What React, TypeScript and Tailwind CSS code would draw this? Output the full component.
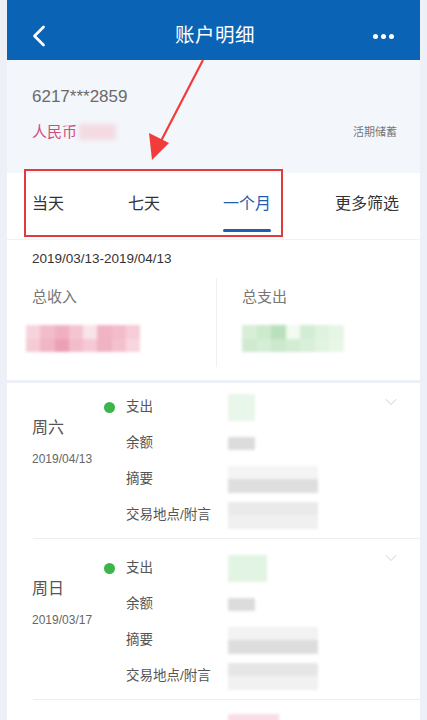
import { ChevronLeft, ChevronDown } from "lucide-react";

const FONT = "font-['Liberation_Sans','Noto_Sans_CJK_SC',sans-serif]";

const pinkCells = [
    "bg-[#f7d3dd]", "bg-[#f2bccb]", "bg-[#efb1c2]", "bg-[#f4c4d1]", "bg-[#f9e4ea]", "bg-[#f0b4c4]", "bg-[#f2bccb]", "bg-[#f6cdd8]",
    "bg-[#f5cbd6]", "bg-[#f0b6c6]", "bg-[#eba0b5]", "bg-[#f2bdcb]", "bg-[#f5c9d5]", "bg-[#efb3c3]", "bg-[#f3c1ce]", "bg-[#f7d6df]",
];

const greenCells = [
    "bg-[#d7eed7]", "bg-[#cde9ce]", "bg-[#b9e0bc]", "bg-[#f2faf2]", "bg-[#d3ecd4]", "bg-[#dff2df]", "bg-[#e6f5e6]",
    "bg-[#cfeacf]", "bg-[#d5edd6]", "bg-[#cbe8cc]", "bg-[#d3ecd3]", "bg-[#d9efda]", "bg-[#e1f3e1]", "bg-[#e9f7e9]",
];

function Mosaic({ cells, cols, className }: { cells: string[]; cols: string; className: string }) {
    return (
        <div className={`grid ${cols} blur-[1.5px] ${className}`}>
            {cells.map((c, i) => (
                <div key={i} className={c} />
            ))}
        </div>
    );
}

type Line = { label: string; value: React.ReactNode };

function TxRow({
    day,
    date,
    lines,
    top,
}: {
    day: string;
    date: string;
    lines: Line[];
    top: string;
}) {
    return (
        <div className={`relative flex pl-[25px] ${top} pb-[5px]`}>
            <div className="w-[72px] shrink-0">
                <div className="mt-[27px] h-[24px] text-[16px] leading-[24px] text-[#555]">{day}</div>
                <div className="mt-[10px] h-[18px] text-[12px] leading-[18px] text-[#666]">{date}</div>
            </div>
            <div className="flex-1">
                {lines.map((l, i) => (
                    <div key={l.label} className="flex h-9 items-center">
                        <div className="w-[10px] shrink-0">
                            {i === 0 && <div className="h-[11px] w-[11px] rounded-full bg-[#3cb54a]" />}
                        </div>
                        <div className="ml-[12px] w-[102px] shrink-0 text-[13.5px] text-[#555]">{l.label}</div>
                        <div className="flex h-full flex-1 items-center">{l.value}</div>
                    </div>
                ))}
            </div>
            <ChevronDown
                className="absolute right-[19px] top-[9px] h-[20px] w-[20px] text-[#cfcfcf]"
                strokeWidth={1.2}
            />
        </div>
    );
}

function Blob({ className }: { className: string }) {
    return <div className={`blur-[1.5px] ${className}`} />;
}

function TwoTone({ top, bottom, w }: { top: string; bottom: string; w: string }) {
    return (
        <div className={`flex ${w} flex-col blur-[1.5px]`}>
            <div className={`h-[13px] ${top}`} />
            <div className={`h-[14px] ${bottom}`} />
        </div>
    );
}

export default function App() {
    return (
        <div className={`relative h-[720px] w-full overflow-hidden bg-[#edf1f7] px-[7px] ${FONT}`}>
            {/* header */}
            <div className="flex h-[60px] items-center bg-[#0b63b6] px-[22px] pt-[12px] text-white">
                <ChevronLeft className="-ml-[8px] h-[36px] w-[36px]" strokeWidth={1.8} />
                <div className="flex-1 text-center text-[19.5px] tracking-[0.5px]">账户明细</div>
                <div className="flex gap-[3px] pr-[4px]">
                    <span className="h-[5px] w-[5px] rounded-full bg-white" />
                    <span className="h-[5px] w-[5px] rounded-full bg-white" />
                    <span className="h-[5px] w-[5px] rounded-full bg-white" />
                </div>
            </div>

            {/* account */}
            <div className="h-[113px] bg-[#f3f6fa] px-[25px] pt-[26px]">
                <div className="h-[22px] text-[17px] leading-[22px] text-[#6a6a6a]">6217***2859</div>
                <div className="mt-[13px] flex items-center justify-between">
                    <div className="flex items-center">
                        <span className="text-[15px] text-[#cf4f7c]">人民币</span>
                        <div className="ml-[2px] h-[16px] w-[37px] bg-[#f4dbe3] blur-[2px]" />
                    </div>
                    <span className="mr-[-2px] text-[11px] text-[#777]">活期储蓄</span>
                </div>
            </div>

            {/* tabs + summary */}
            <div className="bg-white">
                <div className="flex h-[67px] border-b border-[#f2f2f2] pl-[25px] pt-[19px] text-[16px] text-[#333]">
                    <div className="w-[96px]">当天</div>
                    <div className="w-[95px]">七天</div>
                    <div className="w-[112px]">
                        <div className="inline-block text-[#1d5fae]">
                            一个月
                            <div className="mt-[13px] h-[3px] rounded-full bg-[#1d5fae]" />
                        </div>
                    </div>
                    <div>更多筛选</div>
                </div>
                <div className="px-[25px] pt-[9px] text-[13.5px] leading-[20px] text-[#333]">2019/03/13-2019/04/13</div>
                <div className="mt-[8px] flex h-[91px]">
                    <div className="w-[209px] pl-[25px] pt-[10px]">
                        <div className="text-[15px] leading-[20px] text-[#777]">总收入</div>
                        <Mosaic cells={pinkCells} cols="grid-cols-8" className="-ml-[6px] mt-[18px] h-[27px] w-[114px]" />
                    </div>
                    <div className="my-[1px] w-px bg-[#f0f0f0]" />
                    <div className="pl-[25px] pt-[10px]">
                        <div className="text-[15px] leading-[20px] text-[#777]">总支出</div>
                        <Mosaic cells={greenCells} cols="grid-cols-7" className="mt-[18px] h-[27px] w-[102px]" />
                    </div>
                </div>
                <div className="h-[12px]" />
            </div>

            {/* transactions */}
            <div className="mt-[3px] bg-white">
                <TxRow
                    day="周六"
                    date="2019/04/13"
                    top="pt-[6px]"
                    lines={[
                        { label: "支出", value: <Blob className="h-[27px] w-[27px] bg-[#e9f6ea]" /> },
                        { label: "余额", value: <Blob className="h-[13px] w-[27px] bg-[#dcdcdc]" /> },
                        { label: "摘要", value: <TwoTone w="w-[90px]" top="bg-[#f4f4f4]" bottom="bg-[#dedede]" /> },
                        { label: "交易地点/附言", value: <TwoTone w="w-[90px]" top="bg-[#eaeaea]" bottom="bg-[#f0f0f0]" /> },
                    ]}
                />
                <div className="ml-[26px] h-px bg-[#eeeeee]" />
                <TxRow
                    day="周日"
                    date="2019/03/17"
                    top="pt-[11px]"
                    lines={[
                        { label: "支出", value: <Blob className="h-[27px] w-[39px] bg-[#e2f4e3]" /> },
                        { label: "余额", value: <Blob className="h-[13px] w-[27px] bg-[#dcdcdc]" /> },
                        { label: "摘要", value: <TwoTone w="w-[90px]" top="bg-[#f2f2f2]" bottom="bg-[#dddddd]" /> },
                        { label: "交易地点/附言", value: <TwoTone w="w-[90px]" top="bg-[#e6e6e6]" bottom="bg-[#f1f1f1]" /> },
                    ]}
                />
                <div className="ml-[26px] h-px bg-[#eeeeee]" />
                {/* next row, only its top edge is in view */}
                <div className="h-[40px] pl-[221px] pt-[14px]">
                    <Blob className="h-[27px] w-[51px] bg-[#f9dde5]" />
                </div>
            </div>

            {/* annotation: red box + arrow */}
            <div className="pointer-events-none absolute left-[24px] top-[169px] h-[68px] w-[259px] border-2 border-[#e23b3f]" />
            <svg className="pointer-events-none absolute left-0 top-0" width="427" height="200" viewBox="0 0 427 200">
                <line x1="203" y1="60" x2="161" y2="141" stroke="#f23b3b" strokeWidth="2.2" />
                <polygon points="152,160 149,133 169,143" fill="#f23b3b" />
            </svg>
        </div>
    );
}
